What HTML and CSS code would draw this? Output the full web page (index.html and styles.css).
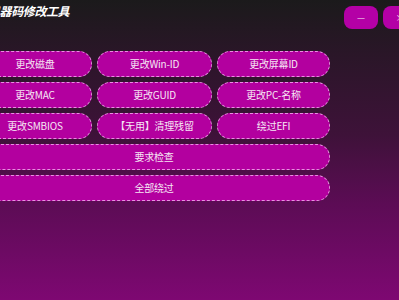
FILE: index.html
```html
<!DOCTYPE html>
<html lang="zh">
<head>
<meta charset="utf-8">
<link rel="stylesheet" href="styles.css">
</head>
<body>
<div class="window">
  <div class="header">
    <div class="title">机器码修改工具</div>
    <div class="win-btns">
      <button class="win-btn">—</button>
      <button class="win-btn">×</button>
    </div>
  </div>
  <div class="grid">
    <button class="btn">更改磁盘</button>
    <button class="btn">更改Win-ID</button>
    <button class="btn">更改屏幕ID</button>
    <button class="btn">更改MAC</button>
    <button class="btn">更改GUID</button>
    <button class="btn">更改PC-名称</button>
    <button class="btn">更改SMBIOS</button>
    <button class="btn">【无用】清理残留</button>
    <button class="btn">绕过EFI</button>
    <button class="btn wide">要求检查</button>
    <button class="btn wide">全部绕过</button>
  </div>
</div>
</body>
</html>
```
FILE: styles.css
```css
html, body {
  margin: 0;
  padding: 0;
  width: 399px;
  height: 300px;
  overflow: hidden;
}
body {
  background: linear-gradient(180deg, #1b1a1b 0%, #2a1628 18%, #3e1239 45%, #5c0c55 68%, #7e0872 100%);
  font-family: "Noto Sans CJK SC", "Noto Sans", sans-serif;
}
.window {
  margin-left: -22px;
  width: 445px;
}
.header {
  display: flex;
  justify-content: space-between;
  align-items: flex-start;
  padding: 6px 6px 0 10px;
  height: 51px;
  box-sizing: border-box;
}
.title {
  color: #ffffff;
  font-weight: bold;
  font-style: italic;
  font-size: 12px;
  line-height: 12px;
  margin-top: -1px;
  letter-spacing: -0.4px;
}
.win-btns {
  display: flex;
  gap: 5px;
}
.win-btn {
  width: 34px;
  height: 23px;
  border: none;
  border-radius: 8px;
  background: #b400a6;
  color: #f2d8ee;
  font-size: 9px;
  padding: 0;
  font-family: "Noto Sans CJK SC", sans-serif;
}
.grid {
  display: grid;
  grid-template-columns: 114px 115px 113px;
  column-gap: 5px;
  row-gap: 5px;
  width: 352px;
}
.btn {
  height: 26px;
  border: 1px dashed #e890e0;
  border-radius: 13px;
  background: #b3009f;
  color: #f6e6f4;
  font-family: "Noto Sans CJK SC", sans-serif;
  font-size: 10px;
  padding: 0;
  line-height: 24px;
  letter-spacing: -0.2px;
}
.wide {
  grid-column: 1 / -1;
}
```
